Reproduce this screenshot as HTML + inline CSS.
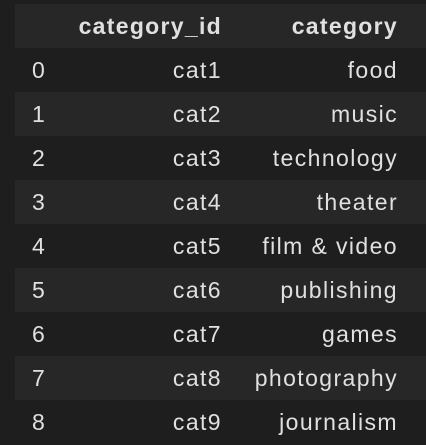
<html><head><style>
body{margin:0;background:#1e1e1e;width:426px;height:441px;overflow:hidden;font-family:"Liberation Sans",sans-serif;color:#e0e0e0;font-size:23px;letter-spacing:1.4px}
.r{position:absolute;left:15px;width:411px;height:44px;line-height:45px}
.s{background:#272727}
.i{position:absolute;left:17px;width:14px;text-align:center}
.a{position:absolute;right:204px;text-align:right}
.b{position:absolute;right:28px;text-align:right;white-space:nowrap}
.h{font-weight:bold;letter-spacing:1.3px}
</style></head><body>
<div class="r s h" style="top:4px"><span class="a">category_id</span><span class="b">category</span></div>
<div class="r" style="top:48px"><span class="i">0</span><span class="a">cat1</span><span class="b">food</span></div>
<div class="r s" style="top:92px"><span class="i">1</span><span class="a">cat2</span><span class="b">music</span></div>
<div class="r" style="top:136px"><span class="i">2</span><span class="a">cat3</span><span class="b">technology</span></div>
<div class="r s" style="top:180px"><span class="i">3</span><span class="a">cat4</span><span class="b">theater</span></div>
<div class="r" style="top:224px"><span class="i">4</span><span class="a">cat5</span><span class="b">film &amp; video</span></div>
<div class="r s" style="top:268px"><span class="i">5</span><span class="a">cat6</span><span class="b">publishing</span></div>
<div class="r" style="top:312px"><span class="i">6</span><span class="a">cat7</span><span class="b">games</span></div>
<div class="r s" style="top:356px"><span class="i">7</span><span class="a">cat8</span><span class="b">photography</span></div>
<div class="r" style="top:400px"><span class="i">8</span><span class="a">cat9</span><span class="b">journalism</span></div>
</body></html>
